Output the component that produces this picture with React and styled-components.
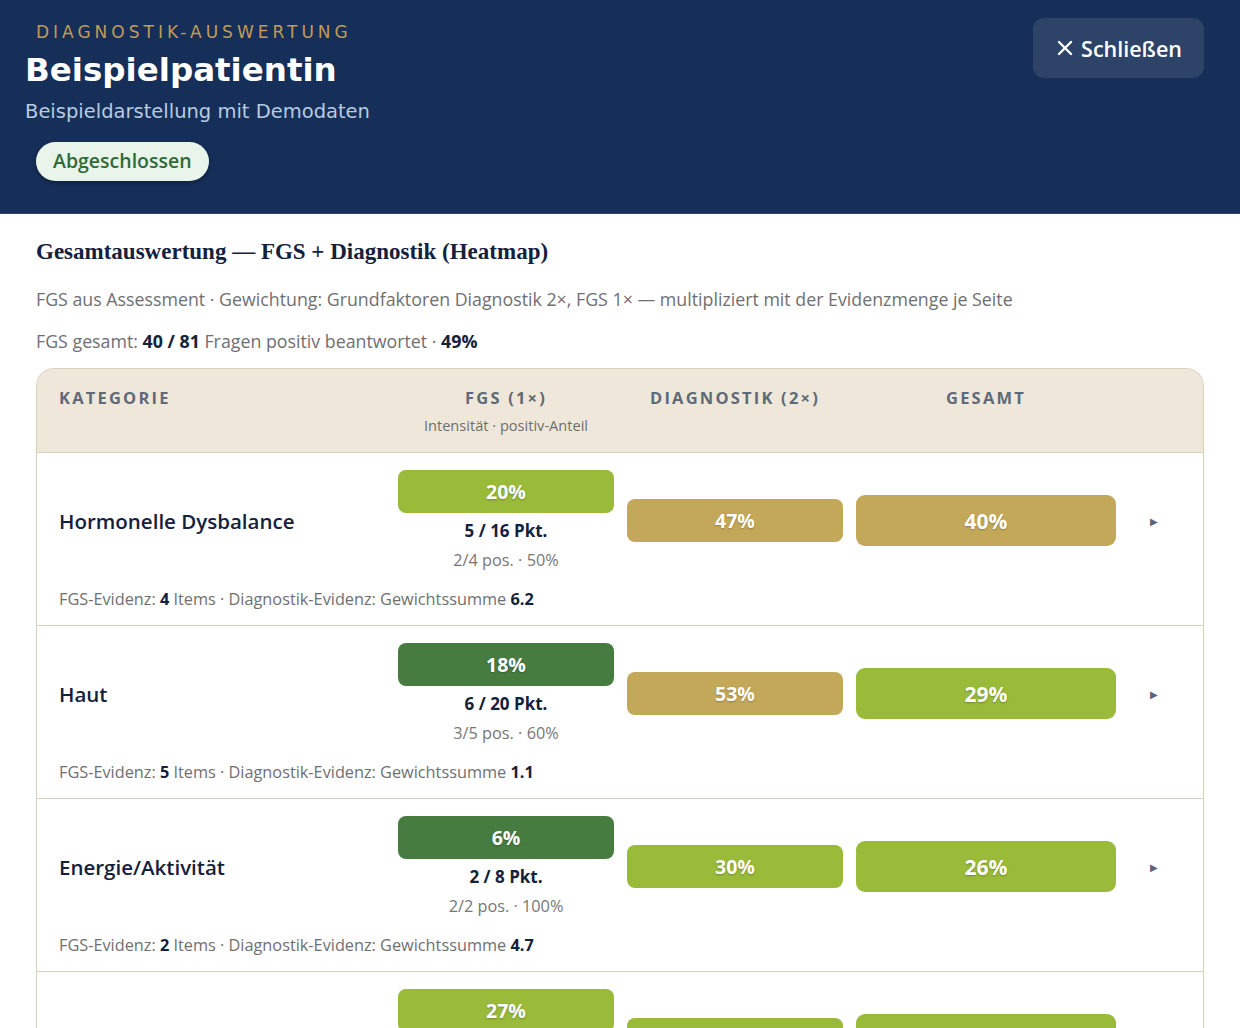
import React from 'react';
import styled, { createGlobalStyle } from 'styled-components';
import { X } from 'lucide-react';

const Global = createGlobalStyle`
    body{
        margin: 0;
        background: #ffffff;
        font-family: "Open Sans", Lato, sans-serif;
    }
`

const Hero = styled.header`
    position: relative;
    height: 214px;
    box-sizing: border-box;
    padding: 20px 36px 0 25px;
    background: #152f58;
    border-bottom: 1px solid #2c4569;
`

const Eyebrow = styled.div`
    padding-left: 11px;
    font-family: "DejaVu Sans", sans-serif;
    font-size: 17px;
    letter-spacing: 4px;
    color: #c29a58;
    line-height: 24px;
`

const Name = styled.h1`
    margin: 4px 0 0 0;
    font-family: "DejaVu Sans", sans-serif;
    font-size: 32.5px;
    font-weight: 700;
    color: #ffffff;
    line-height: 44px;
`

const Sub = styled.div`
    margin-top: 6px;
    font-family: "DejaVu Sans", sans-serif;
    font-size: 19.5px;
    color: #b9cae2;
    line-height: 28px;
`

const Status = styled.span`
    display: inline-block;
    margin: 16px 0 0 11px;
    padding: 7px 17px 8px 17px;
    background: #e9f4ea;
    border-radius: 20px;
    box-shadow: 0 2px 4px rgba(0, 0, 0, 0.35);
    font-size: 19.5px;
    font-weight: 600;
    color: #2f6b36;
    line-height: 24px;
`

const CloseButton = styled.button`
    position: absolute;
    top: 18px;
    right: 36px;
    display: flex;
    align-items: center;
    gap: 4px;
    height: 60px;
    padding: 0 22px 0 20px;
    border: none;
    border-radius: 11px;
    background: #2d4468;
    font-family: "Open Sans", sans-serif;
    font-size: 21.5px;
    font-weight: 600;
    color: #ffffff;
    cursor: pointer;
`

const Main = styled.main`
    padding: 22px 36px 0 36px;
`

const Heading = styled.h2`
    margin: 0;
    font-family: "Liberation Serif", serif;
    font-size: 23px;
    font-weight: 700;
    color: #14213d;
    line-height: 32px;
`

const Note = styled.p`
    margin: ${p => p.top}px 0 0 0;
    font-size: 17.8px;
    color: #6f6f72;
    line-height: 24px;
    b{
        color: #14213d;
        font-weight: 700;
    }
`

const Table = styled.div`
    margin-top: 15px;
    border: 1.5px solid #d7d0bc;
    border-bottom: none;
    border-radius: 18px 18px 0 0;
    overflow: hidden;
`

const Cols = styled.div`
    display: grid;
    grid-template-columns: 1fr 216px 216px 260px 50px;
    column-gap: 13px;
    padding: 0 24px 0 22px;
`

const HeadRow = styled(Cols)`
    align-items: start;
    padding-top: 18px;
    padding-bottom: 18px;
    background: #efe8da;
    border-bottom: 1.5px solid #d7d0bc;
`

const HeadCell = styled.div`
    text-align: ${p => p.left ? 'left' : 'center'};
    font-size: 16.5px;
    font-weight: 700;
    letter-spacing: 2.2px;
    color: #5f6a78;
    line-height: 22px;
    small{
        display: block;
        margin-top: 7px;
        font-size: 14.6px;
        font-weight: 400;
        letter-spacing: 0;
        color: #6e6e6e;
        line-height: 18px;
    }
`

const Row = styled(Cols)`
    align-items: center;
    padding-top: 17px;
    padding-bottom: 16px;
    border-bottom: 1.5px solid #d7d0bc;
`

const Label = styled.div`
    font-size: 20.5px;
    font-weight: 600;
    color: #14213d;
`

const Pill = styled.div`
    display: flex;
    align-items: center;
    justify-content: center;
    height: ${p => p.big ? 51 : 43}px;
    border-radius: ${p => p.big ? 9 : 8}px;
    background: ${p => p.tone};
    font-size: ${p => p.big ? 21 : 19.5}px;
    font-weight: 700;
    color: #ffffff;
    text-shadow: 0 1px 2px rgba(0, 0, 0, 0.25);
`

const FgsCell = styled.div`
    text-align: center;
`

const Points = styled.div`
    margin-top: 7px;
    font-size: 17px;
    font-weight: 700;
    color: #14213d;
    line-height: 22px;
`

const Share = styled.div`
    margin-top: 7px;
    font-size: 16.3px;
    color: #777777;
    line-height: 22px;
`

const Arrow = styled.div`
    text-align: center;
    font-size: 10px;
    color: #5b6478;
`

const Evidence = styled.div`
    grid-column: 1 / -1;
    margin-top: 18px;
    font-size: 16.3px;
    color: #6f6f72;
    line-height: 20px;
    b{
        color: #14213d;
        font-weight: 700;
    }
`

const tones = {
    lime: '#9aba3a',
    forest: '#477c40',
    gold: '#c4a85a',
}

const rows = [
    { name: 'Hormonelle Dysbalance', fgs: 20, fgsTone: 'lime', pts: '5 / 16 Pkt.', share: '2/4 pos. · 50%', diag: 47, diagTone: 'gold', total: 40, totalTone: 'gold', items: 4, weight: '6.2' },
    { name: 'Haut', fgs: 18, fgsTone: 'forest', pts: '6 / 20 Pkt.', share: '3/5 pos. · 60%', diag: 53, diagTone: 'gold', total: 29, totalTone: 'lime', items: 5, weight: '1.1' },
    { name: 'Energie/Aktivität', fgs: 6, fgsTone: 'forest', pts: '2 / 8 Pkt.', share: '2/2 pos. · 100%', diag: 30, diagTone: 'lime', total: 26, totalTone: 'lime', items: 2, weight: '4.7' },
    { name: 'Verdauung', fgs: 27, fgsTone: 'lime', pts: '4 / 15 Pkt.', share: '3/4 pos. · 75%', diag: 35, diagTone: 'lime', total: 32, totalTone: 'lime', items: 4, weight: '3.9' },
]

const CategoryRow = ({row}) => {
    return(
        <Row>
            <Label>{row.name}</Label>
            <FgsCell>
                <Pill tone={tones[row.fgsTone]}>{row.fgs}%</Pill>
                <Points>{row.pts}</Points>
                <Share>{row.share}</Share>
            </FgsCell>
            <Pill tone={tones[row.diagTone]}>{row.diag}%</Pill>
            <Pill big tone={tones[row.totalTone]}>{row.total}%</Pill>
            <Arrow>▶</Arrow>
            <Evidence>
                FGS-Evidenz: <b>{row.items}</b> Items · Diagnostik-Evidenz: Gewichtssumme <b>{row.weight}</b>
            </Evidence>
        </Row>
    )
}

const App = () => {
    return(
        <>
            <Global/>
            <Hero>
                <Eyebrow>DIAGNOSTIK-AUSWERTUNG</Eyebrow>
                <Name>Beispielpatientin</Name>
                <Sub>Beispieldarstellung mit Demodaten</Sub>
                <Status>Abgeschlossen</Status>
                <CloseButton>
                    <X size={24} strokeWidth={2.4}/>
                    Schließen
                </CloseButton>
            </Hero>
            <Main>
                <Heading>Gesamtauswertung — FGS + Diagnostik (Heatmap)</Heading>
                <Note top={19}>FGS aus Assessment · Gewichtung: Grundfaktoren Diagnostik 2×, FGS 1× — multipliziert mit der Evidenzmenge je Seite</Note>
                <Note top={18}>FGS gesamt: <b>40 / 81</b> Fragen positiv beantwortet · <b>49%</b></Note>
                <Table>
                    <HeadRow>
                        <HeadCell left>KATEGORIE</HeadCell>
                        <HeadCell>FGS (1×)<small>Intensität · positiv-Anteil</small></HeadCell>
                        <HeadCell>DIAGNOSTIK (2×)</HeadCell>
                        <HeadCell>GESAMT</HeadCell>
                        <div/>
                    </HeadRow>
                    {rows.map(row => <CategoryRow key={row.name} row={row}/>)}
                </Table>
            </Main>
        </>
    )
}

export default App;
